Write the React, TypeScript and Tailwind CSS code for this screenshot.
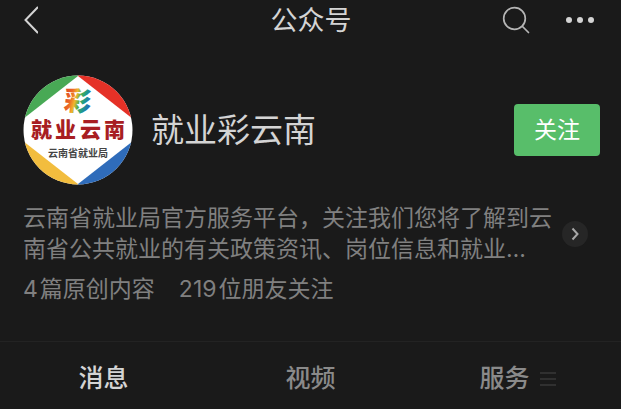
import { useState } from "react";

const tabs = ["消息", "视频", "服务"];

const Logo = () => (
  <svg
    viewBox="0 0 110 110"
    className="size-[110px] shrink-0"
    role="img"
    aria-label="就业云南"
  >
    <defs>
      <clipPath id="disc">
        <circle cx="55" cy="55" r="54.5" />
      </clipPath>
      <linearGradient id="rainbow" x1="0" y1="0.3" x2="1" y2="0.5">
        <stop offset="0" stopColor="#dd4a26" />
        <stop offset="0.25" stopColor="#ec6a25" />
        <stop offset="0.42" stopColor="#f0b62c" />
        <stop offset="0.58" stopColor="#4fae4c" />
        <stop offset="0.75" stopColor="#1f9c8c" />
        <stop offset="1" stopColor="#2765bd" />
      </linearGradient>
    </defs>
    <g clipPath="url(#disc)">
      <rect width="110" height="110" fill="#fff" />
      <path d="M0 0H55V1L0 44Z" fill="#48a955" />
      <path d="M110 0H55V1L110 44Z" fill="#e53127" />
      <path d="M0 110H55V109L0 66Z" fill="#f2bd3e" />
      <path d="M110 110H55V109L110 66Z" fill="#2f6cba" />
    </g>
    <text
      x="41"
      y="36"
      fontSize="27"
      fontWeight="900"
      fill="url(#rainbow)"
      transform="rotate(6 54 27)"
    >
      彩
    </text>
    <text x="8 32 57 81" y="62" fontSize="21" fontWeight="900" fill="#a81e22">
      就业云南
    </text>
    <text x="25" y="82" fontSize="10" fontWeight="700" fill="#444">
      云南省就业局
    </text>
  </svg>
);

const App = () => {
  const [active, setActive] = useState("消息");
  const [followed, setFollowed] = useState(false);

  return (
    <div className="min-h-screen bg-[#1a1a1a] font-['Inter','Noto_Sans_CJK_SC',sans-serif] text-[#d4d4d4]">
      <header className="grid grid-cols-[1fr_auto_1fr] items-center pr-[21px] pl-[22px]">
        <button type="button" aria-label="返回" className="w-4">
          <svg
            viewBox="0 0 16 28"
            className="h-7 w-4"
            fill="none"
            stroke="currentColor"
            strokeWidth="2"
            strokeLinecap="round"
          >
            <path d="M15.5 1.5L3.5 14L15.5 26.5" />
          </svg>
        </button>
        <h1 className="pt-[2px] text-center text-[27px] leading-[38px]">
          公众号
        </h1>
        <div className="flex items-center justify-end gap-9 pr-1">
          <button type="button" aria-label="搜索">
            <svg
              viewBox="0 0 28 28"
              className="size-7"
              fill="none"
              stroke="#b5b5b5"
              strokeWidth="1.7"
              strokeLinecap="round"
            >
              <circle cx="12.5" cy="12.5" r="10.8" />
              <path d="M20.5 20.5L26.5 26.5" />
            </svg>
          </button>
          <button type="button" aria-label="更多">
            <svg viewBox="0 0 30 8" className="h-2 w-[30px]" fill="currentColor">
              <circle cx="3" cy="4" r="3" />
              <circle cx="14" cy="4" r="3" />
              <circle cx="25" cy="4" r="3" />
            </svg>
          </button>
        </div>
      </header>

      <main>
        <section className="pt-[35px] pr-[21px] pb-9 pl-[23px]">
          <div className="flex items-center">
            <Logo />
            <h2 className="ml-[18px] flex-1 text-[33px] leading-10">
              就业彩云南
            </h2>
            <button
              type="button"
              onClick={() => setFollowed(!followed)}
              className="h-[52px] w-[86px] rounded-[4px] bg-[#58be6a] text-[23px] text-white"
            >
              {followed ? "已关注" : "关注"}
            </button>
          </div>

          <div className="mt-[18px] flex items-center justify-between pr-3 text-[#808080]">
            <p className="line-clamp-2 text-[23px] leading-[31px]">
              云南省就业局官方服务平台，关注我们您将了解到云
              <br />
              南省公共就业的有关政策资讯、岗位信息和就业…
            </p>
            <button
              type="button"
              aria-label="查看详情"
              className="flex size-[26px] shrink-0 items-center justify-center rounded-full bg-[#262626]"
            >
              <svg
                viewBox="0 0 8 14"
                className="h-[14px] w-2"
                fill="none"
                stroke="#a8a8a8"
                strokeWidth="2"
              >
                <path d="M1.5 1.5L6.5 7L1.5 12.5" />
              </svg>
            </button>
          </div>

          <div className="mt-[9px] flex gap-6 text-[23px] leading-[31px] text-[#808080]">
            <p className="flex gap-[2px]">
              <span>4</span>
              <span>篇原创内容</span>
            </p>
            <p className="flex gap-[2px]">
              <span>219</span>
              <span>位朋友关注</span>
            </p>
          </div>
        </section>

        <nav className="grid grid-cols-3 border-t border-[#232323]">
          {tabs.map((tab) => (
            <button
              key={tab}
              type="button"
              onClick={() => setActive(tab)}
              className={`flex h-[67px] items-center justify-center gap-[10px] pt-[6px] text-[25px] font-medium ${active === tab ? "text-[#d4d4d4]" : "text-[#8a8a8a]"}`}
            >
              {tab}
              {tab === "服务" && (
                <svg
                  viewBox="0 0 16 16"
                  className="size-4"
                  stroke="#303030"
                  strokeWidth="2"
                >
                  <path d="M0 2H16M0 8H16M0 14H16" />
                </svg>
              )}
            </button>
          ))}
        </nav>
      </main>
    </div>
  );
};

export default App;
